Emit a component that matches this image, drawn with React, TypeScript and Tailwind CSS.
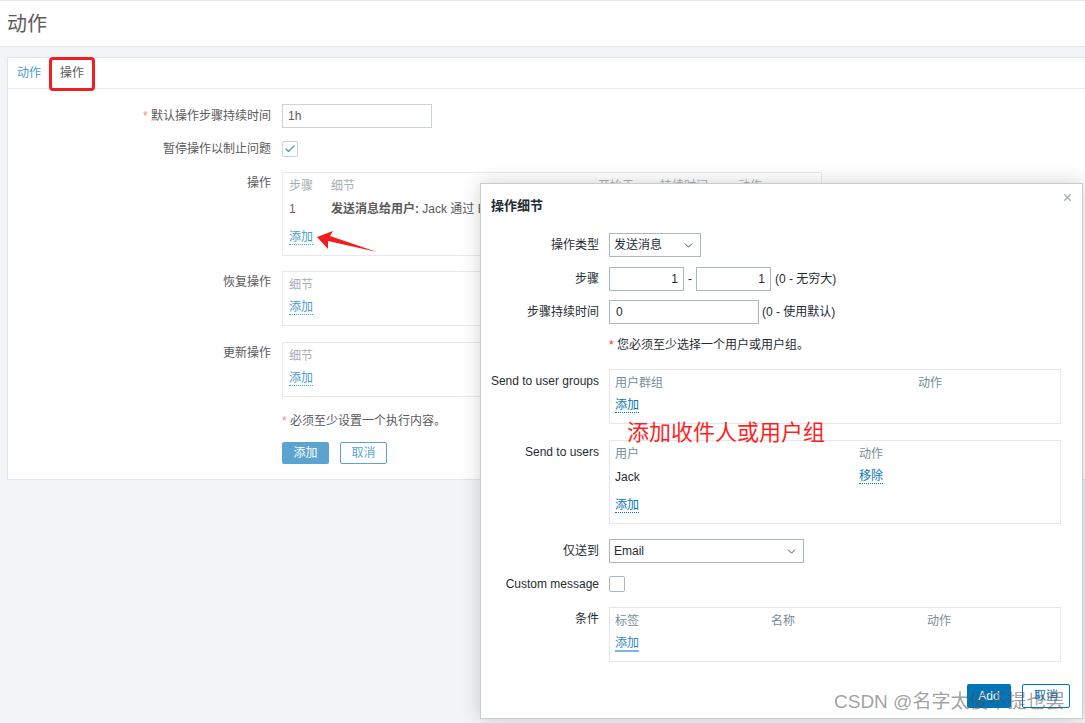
import React from 'react'
import { ChevronDown, Check, X } from 'lucide-react'

const PageLink = ({ children }: { children: React.ReactNode }) => (
    <span className="text-[#4a9bd0] border-b border-dotted border-[#4a9bd0] leading-[14px]">{children}</span>
)

const ModalLink = ({ children, solid }: { children: React.ReactNode; solid?: boolean }) => (
    <span className={solid ? 'text-[#2c88c4] border-b-2 border-solid border-[#7db5dc] leading-[14px]' : 'text-[#0275b8] border-b border-dotted border-[#0275b8] leading-[14px]'}>
        {children}
    </span>
)

const PageRow = ({ label, top, className, children }: { label: React.ReactNode; top?: boolean; className?: string; children: React.ReactNode }) => (
    <div className={`flex ${top ? 'items-start' : 'items-center'} ${className ?? ''}`}>
        <div className={`w-[264px] shrink-0 text-right pr-[1px] text-[#5a5a5a] leading-[14px] ${top ? 'pt-[4px]' : ''}`}>{label}</div>
        <div className="ml-[10px] flex items-center">{children}</div>
    </div>
)

const ModalRow = ({ label, top, className, children }: { label: React.ReactNode; top?: boolean; className?: string; children: React.ReactNode }) => (
    <div className={`flex ${top ? 'items-start' : 'items-center'} ${className ?? ''}`}>
        <div className={`w-[118px] shrink-0 text-right text-[#1f2c33] leading-[14px] ${top ? 'pt-[5px]' : ''}`}>{label}</div>
        <div className="ml-[10px] flex items-center">{children}</div>
    </div>
)

const PageBox = ({ children }: { children: React.ReactNode }) => (
    <div className="w-[540px] border border-[#e6eaec] px-[6px] pt-[1px] pb-[6px]">{children}</div>
)

const ModalBox = ({ children }: { children: React.ReactNode }) => (
    <div className="w-[452px] border border-[#e3e7e9] px-[5px] pt-[1px] pb-[6px]">{children}</div>
)

const App = () => {
    return (
        <div className="relative w-[1085px] h-[723px] overflow-hidden bg-[#f2f4f6] text-[12px] font-['Liberation_Sans','Noto_Sans_CJK_SC',sans-serif]">
            {/* header */}
            <div className="h-[47px] bg-white border-t border-[#d6d9db] border-b border-[#e4e7e9] flex items-center pl-[7px]">
                <h1 className="text-[20px] leading-[24px] text-[#5c5c5c]">动作</h1>
            </div>

            {/* main card */}
            <div className="mt-[10px] ml-[7px] w-[1090px] bg-white border border-[#e2e6e8]">
                <div className="h-[31px] border-b border-[#e9ecee] flex items-center pl-[9px] gap-[19px]">
                    <span className="text-[#4a9bd0] leading-[14px]">动作</span>
                    <span className="relative text-[#5a5a5a] leading-[14px]">
                        操作
                        <span className="absolute -left-[11px] -right-[11px] -top-[9px] -bottom-[11px] border-[3px] border-[#f01e1e] rounded-[4px]" />
                    </span>
                </div>

                <div className="pt-[15px] pb-[15px]">
                    <PageRow label={<><span className="text-[#ee8b8b]">*</span> 默认操作步骤持续时间</>}>
                        <div className="w-[150px] h-[24px] border border-[#c9d3d8] px-[5px] flex items-center text-[#5a5a5a]">1h</div>
                    </PageRow>

                    <PageRow label="暂停操作以制止问题" className="mt-[9px] h-[24px]">
                        <div className="w-[16px] h-[16px] border border-[#c9d3d8] rounded-[2px] flex items-center justify-center">
                            <Check size={12} strokeWidth={2.5} className="text-[#4a9bd0]" />
                        </div>
                    </PageRow>

                    <PageRow label="操作" top className="mt-[11px]">
                        <PageBox>
                            <div className="flex h-[23px] items-center text-[#a7b0b5] whitespace-nowrap">
                                <span className="w-[42px]">步骤</span>
                                <span className="w-[267px]">细节</span>
                                <span className="w-[62px]">开始于</span>
                                <span className="w-[78px]">持续时间</span>
                                <span>动作</span>
                            </div>
                            <div className="flex h-[23px] items-center whitespace-nowrap mb-[6px]">
                                <span className="w-[42px] text-[#7a5478]">1</span>
                                <span className="text-[#5a5a5a]"><b>发送消息给用户:</b> Jack 通过 E</span>
                            </div>
                            <div className="h-[23px] flex items-center"><PageLink>添加</PageLink></div>
                        </PageBox>
                    </PageRow>

                    <PageRow label="恢复操作" top className="mt-[15px]">
                        <PageBox>
                            <div className="flex h-[23px] items-center text-[#a7b0b5]">细节</div>
                            <div className="h-[23px] flex items-center"><PageLink>添加</PageLink></div>
                        </PageBox>
                    </PageRow>

                    <PageRow label="更新操作" top className="mt-[16px]">
                        <PageBox>
                            <div className="flex h-[23px] items-center text-[#a7b0b5]">细节</div>
                            <div className="h-[23px] flex items-center"><PageLink>添加</PageLink></div>
                        </PageBox>
                    </PageRow>

                    <div className="mt-[17px] ml-[274px] leading-[14px] text-[#5a5a5a]">
                        <span className="text-[#ee8b8b]">*</span> 必须至少设置一个执行内容。
                    </div>

                    <div className="mt-[14px] ml-[274px] flex gap-[11px]">
                        <button className="w-[47px] h-[22px] rounded-[2px] bg-[#5ba4d2] text-white leading-[14px]">添加</button>
                        <button className="w-[47px] h-[22px] rounded-[2px] border border-[#5ba4d2] bg-white text-[#5ba4d2] leading-[14px]">取消</button>
                    </div>
                </div>
            </div>

            {/* red arrow annotation */}
            <svg className="absolute left-[310px] top-[222px]" width="72" height="34" viewBox="0 0 72 34">
                <polygon points="7,15 23,9 20,14 67,30 18,19 18,27" fill="#f01e1e" />
            </svg>

            {/* modal */}
            <div className="absolute left-[480px] top-[183px] w-[603px] h-[536px] bg-white border border-[#c6cdd1] shadow-[0_0_18px_rgba(0,0,0,0.18)]">
                <X size={11} strokeWidth={3.5} className="absolute top-[8px] right-[9px] text-[#a9b3b9]" />
                <div className="h-[44px] flex items-center pl-[10px]">
                    <h2 className="text-[13px] font-bold text-[#1f2c33] leading-[16px]">操作细节</h2>
                </div>

                <div className="pt-[5px]">
                    <ModalRow label="操作类型" className="h-[24px]">
                        <div className="w-[92px] h-[24px] border border-[#a9b7be] flex items-center justify-between pl-[4px] pr-[5px] text-[#1f2c33]">
                            <span>发送消息</span>
                            <ChevronDown size={13} strokeWidth={1.5} />
                        </div>
                    </ModalRow>

                    <ModalRow label="步骤" className="mt-[10px] h-[24px]">
                        <div className="w-[75px] h-[24px] border border-[#a9b7be] flex items-center justify-end pr-[5px] text-[#1f2c33]">1</div>
                        <span className="px-[4px] text-[#1f2c33]">-</span>
                        <div className="w-[75px] h-[24px] border border-[#a9b7be] flex items-center justify-end pr-[5px] text-[#1f2c33]">1</div>
                        <span className="ml-[4px] text-[#1f2c33]">(0 - 无穷大)</span>
                    </ModalRow>

                    <ModalRow label="步骤持续时间" className="mt-[9px] h-[24px]">
                        <div className="w-[150px] h-[24px] border border-[#a9b7be] flex items-center pl-[6px] text-[#1f2c33]">0</div>
                        <span className="ml-[3px] text-[#1f2c33]">(0 - 使用默认)</span>
                    </ModalRow>

                    <div className="mt-[14px] ml-[128px] leading-[14px] text-[#1f2c33]">
                        <span className="text-[#e33]">*</span> 您必须至少选择一个用户或用户组。
                    </div>

                    <ModalRow label="Send to user groups" top className="mt-[17px]">
                        <ModalBox>
                            <div className="flex h-[23px] items-center text-[#768d99]">
                                <span className="w-[303px]">用户群组</span>
                                <span>动作</span>
                            </div>
                            <div className="h-[23px] flex items-center"><ModalLink>添加</ModalLink></div>
                        </ModalBox>
                    </ModalRow>

                    <ModalRow label="Send to users" top className="mt-[16px]">
                        <ModalBox>
                            <div className="flex h-[23px] items-center text-[#768d99]">
                                <span className="w-[244px]">用户</span>
                                <span>动作</span>
                            </div>
                            <div className="flex h-[23px] items-center mb-[6px] text-[#1f2c33]">
                                <span className="w-[244px]">Jack</span>
                                <ModalLink>移除</ModalLink>
                            </div>
                            <div className="h-[23px] flex items-center"><ModalLink>添加</ModalLink></div>
                        </ModalBox>
                    </ModalRow>

                    <ModalRow label="仅送到" className="mt-[15px] h-[24px]">
                        <div className="w-[195px] h-[24px] border border-[#a9b7be] flex items-center justify-between pl-[4px] pr-[5px] text-[#1f2c33]">
                            <span>Email</span>
                            <ChevronDown size={13} strokeWidth={1.5} />
                        </div>
                    </ModalRow>

                    <ModalRow label="Custom message" className="mt-[9px] h-[24px]">
                        <div className="w-[16px] h-[16px] border border-[#a9b7be] rounded-[2px]" />
                    </ModalRow>

                    <ModalRow label="条件" top className="mt-[11px]">
                        <ModalBox>
                            <div className="flex h-[23px] items-center text-[#768d99]">
                                <span className="w-[156px]">标签</span>
                                <span className="w-[156px]">名称</span>
                                <span>动作</span>
                            </div>
                            <div className="h-[23px] flex items-center"><ModalLink solid>添加</ModalLink></div>
                        </ModalBox>
                    </ModalRow>

                    <div className="mt-[22px] flex justify-end gap-[11px] pr-[12px]">
                        <button className="w-[44px] h-[24px] rounded-[2px] bg-[#0275b8] text-white leading-[14px]">Add</button>
                        <button className="w-[48px] h-[24px] rounded-[2px] border border-[#0275b8] bg-white text-[#0275b8] leading-[14px]">取消</button>
                    </div>
                </div>

                <div className="absolute left-[146px] top-[237px] text-[22px] leading-[24px] text-[#ff1f1f] whitespace-nowrap">添加收件人或用户组</div>
            </div>

            {/* watermark */}
            <div className="absolute left-[834px] top-[690px] text-[19px] leading-[24px] text-[rgba(80,80,80,0.55)] whitespace-nowrap">CSDN @名字太俊不提也罢</div>
        </div>
    )
}

export default App
